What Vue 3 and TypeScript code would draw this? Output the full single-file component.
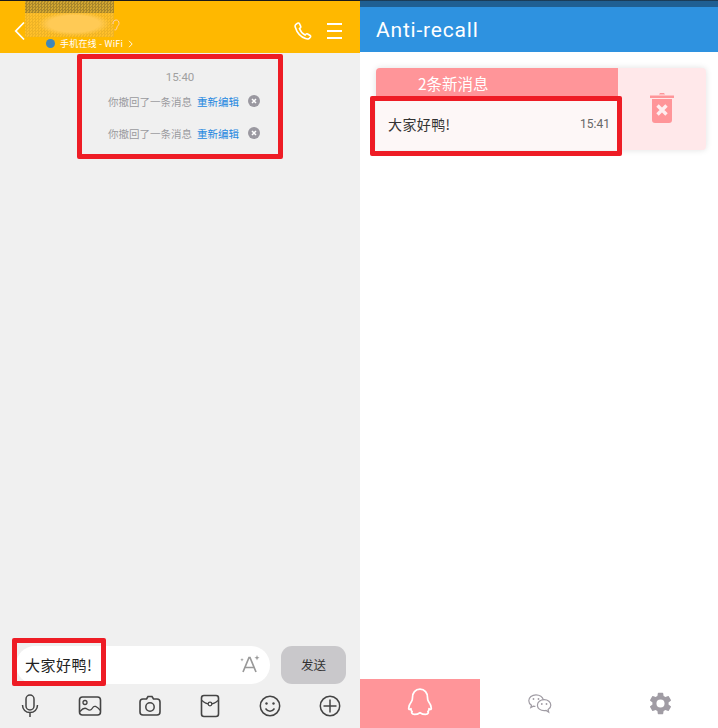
<script setup lang="ts">
const recalled: string[] = ['你撤回了一条消息', '你撤回了一条消息']
</script>

<template>
  <div class="page">
    <section class="chat">
      <header class="chat-head">
        <div class="mosaic">
          <div class="mosaic-dark"></div>
          <div class="mosaic-light"></div>
        </div>
        <svg class="ear" width="8" height="12" viewBox="0 0 8 12"><path d="M1 5c0-2.500 1.300-4 3.200-4S7 2.500 7 4.500 4.800 7 4.800 9 3.500 11 2.500 10.800" fill="none" stroke="#ffd0b0" stroke-width="1"/></svg>
        <svg class="back" width="12" height="20" viewBox="0 0 12 20"><path d="M10 1.500 1.800 10 10 18.500" fill="none" stroke="#fff" stroke-width="1.800"/></svg>
        <div class="status">
          <span class="dot"></span>
          <span>手机在线 - WiFi</span>
          <svg width="5" height="8" viewBox="0 0 5 8"><path d="M1 .8 4.200 4 1 7.200" fill="none" stroke="#fff" stroke-width=".9"/></svg>
        </div>
        <div class="head-actions">
          <svg width="18" height="18" viewBox="0 0 18 18"><path d="M3.600 1.200 1.700 2.600c-.7.600-.7 1.600-.4 2.600 1.600 5.300 5.400 9.600 10.300 11.400 1.300.5 2.700.5 3.700-.3l1-1.100c.5-.6.400-1.300-.2-1.700l-2.400-1.500c-.6-.4-1.300-.3-1.800.2l-.8.8c-2.600-1.200-4.600-3.600-5.600-6.400l.8-.7c.5-.5.600-1.100.3-1.700L5.300 1.500c-.4-.6-1.100-.7-1.700-.3Z" fill="none" stroke="#fff" stroke-width="1.600"/></svg>
          <div class="menu"><i></i><i></i><i></i></div>
        </div>
      </header>

      <div class="thread">
        <div class="time">15:40</div>
        <div v-for="(text, i) in recalled" :key="i" class="recall">
          <span class="recall-text">{{ text }}</span>
          <span class="recall-link">重新编辑</span>
          <svg width="12" height="12" viewBox="0 0 12 12"><circle cx="6" cy="6" r="6" fill="#9a98a0"/><path d="M4 4l4 4M8 4l-4 4" stroke="#fff" stroke-width="1.500"/></svg>
        </div>
        <div class="mark mark-top"></div>
      </div>

      <div class="composer">
        <div class="field">
          <span class="field-text">大家好鸭!</span>
          <svg class="font-icon" width="20" height="18" viewBox="0 0 20 18"><path d="M3 17 9 2.500h1L16 17M5 12.500h9" fill="none" stroke="#999" stroke-width="1.700"/><path d="M17 0l.7 2 1.900.7-1.900.7-.7 2-.7-2-1.900-.7 1.900-.7ZM2 3l.5 1.200 1.200.5-1.200.5L2 6.500l-.5-1.300-1.200-.5 1.200-.5Z" fill="#999"/></svg>
        </div>
        <div class="send">发送</div>
        <div class="mark mark-input"></div>
      </div>

      <div class="tools">
        <svg width="22" height="24" viewBox="0 0 22 24"><rect x="7" y="1" width="8" height="15" rx="4" fill="none" stroke="#444" stroke-width="1.500"/><path d="M3.500 11c0 4.500 3.200 7.500 7.500 7.500s7.500-3 7.500-7.500M11 18.500V23" fill="none" stroke="#444" stroke-width="1.500"/></svg>
        <svg width="24" height="22" viewBox="0 0 24 22"><rect x="1.500" y="2" width="21" height="18" rx="3" fill="none" stroke="#444" stroke-width="1.600"/><circle cx="7" cy="7.500" r="2" fill="none" stroke="#444" stroke-width="1.300"/><path d="M2 16.500c3-3.500 5-4 7-2.500s4 2 5.500-1 4-2 8 2.500" fill="none" stroke="#444" stroke-width="1.300"/></svg>
        <svg width="24" height="22" viewBox="0 0 24 22"><path d="M8.500 4 10 1.500h4L15.500 4H19a3 3 0 0 1 3 3v10a3 3 0 0 1-3 3H5a3 3 0 0 1-3-3V7a3 3 0 0 1 3-3Z" fill="none" stroke="#444" stroke-width="1.600"/><circle cx="12" cy="12" r="4.200" fill="none" stroke="#444" stroke-width="1.500"/></svg>
        <svg width="20" height="24" viewBox="0 0 20 24"><rect x="1.500" y="1.500" width="17" height="21" rx="2.500" fill="none" stroke="#444" stroke-width="1.600"/><path d="M2 6.500c2.500 2.500 5 3.500 8 3.500s5.500-1 8-3.500" fill="none" stroke="#444" stroke-width="1.300"/><circle cx="10" cy="10" r="1.800" fill="#f0f0f0" stroke="#444" stroke-width="1.200"/></svg>
        <svg width="22" height="22" viewBox="0 0 22 22"><circle cx="11" cy="11" r="9.700" fill="none" stroke="#444" stroke-width="1.500"/><circle cx="7.500" cy="8.500" r="1.200" fill="#444"/><circle cx="14.500" cy="8.500" r="1.200" fill="#444"/><path d="M6.500 13.500c1.200 1.800 2.700 2.700 4.500 2.700s3.300-.9 4.500-2.700" fill="none" stroke="#444" stroke-width="1.400"/></svg>
        <svg width="22" height="22" viewBox="0 0 22 22"><circle cx="11" cy="11" r="9.700" fill="none" stroke="#444" stroke-width="1.500"/><path d="M11 4.500v13M4.500 11h13" stroke="#444" stroke-width="1.500"/></svg>
      </div>
    </section>

    <section class="app">
      <div class="app-strip"></div>
      <header class="app-head">Anti-recall</header>
      <main class="app-body">
        <div class="card">
          <div class="card-main">
            <div class="card-title">2条新消息</div>
            <div class="card-row">
              <span class="card-msg">大家好鸭!</span>
              <span class="card-time">15:41</span>
            </div>
            <div class="mark mark-card"></div>
          </div>
          <div class="card-del">
            <svg width="24" height="31" viewBox="0 0 24 31"><path d="M0 3.500h24V6H0ZM9 2.500 10 1h4l1 1.500Z" fill="#ff9599"/><path d="M2 7h20v21a3 3 0 0 1-3 3H5a3 3 0 0 1-3-3Z" fill="#ff9599"/><path d="m7.500 13.500 9 9M16.500 13.500l-9 9" stroke="#ffeef0" stroke-width="3.400"/></svg>
          </div>
        </div>
      </main>
      <nav class="tabs">
        <div class="tab tab-on">
          <svg width="26" height="28" viewBox="0 0 26 28"><path d="M13 1.200C8.200 1.200 5.500 5 5.500 9.500c0 1.500-.2 2.800-1 3.900-1.500 2-2.800 4.500-2.800 6.800 0 1 .4 1.400 1 1.200l1.300-.8c-.2 1.400.3 2.400 1.200 3.100-1 .4-.8 2.700 2.300 2.700 2.300 0 4-.7 5.500-1.700 1.500 1 3.200 1.700 5.500 1.700 3.100 0 3.300-2.300 2.300-2.700.9-.7 1.400-1.700 1.200-3.100l1.300.8c.6.200 1-.2 1-1.200 0-2.300-1.300-4.800-2.800-6.800-.8-1.100-1-2.400-1-3.900C20.500 5 17.800 1.200 13 1.200Z" fill="none" stroke="#fff" stroke-width="1.700" stroke-linejoin="round"/></svg>
        </div>
        <div class="tab">
          <svg width="24" height="20" viewBox="0 0 24 20"><path d="M8 .8C4 .8.800 3.400.800 6.700c0 1.900 1 3.500 2.700 4.600l-.7 2.200 2.600-1.400c.6.200 1.300.3 2 .3M15.400 6C14.700 3 11.600.8 8 .8" fill="none" stroke="#a09ca4" stroke-width="1.200"/><path d="M16.200 5.700c-3.800 0-6.800 2.400-6.800 5.500s3 5.500 6.800 5.500c.7 0 1.300-.1 1.900-.3l2.600 1.700-.6-2.500c1.600-1 2.700-2.600 2.700-4.400 0-3.100-2.900-5.500-6.600-5.500Z" fill="none" stroke="#a09ca4" stroke-width="1.200"/><circle cx="5.500" cy="5" r=".9" fill="#a09ca4"/><circle cx="10.500" cy="5" r=".9" fill="#a09ca4"/><circle cx="13.800" cy="10" r=".9" fill="#a09ca4"/><circle cx="18.500" cy="10" r=".9" fill="#a09ca4"/></svg>
        </div>
        <div class="tab">
          <svg width="27" height="27" viewBox="0 0 24 24"><path fill="#a09ca4" d="M19.140 12.940c.04-.3.060-.61.060-.94s-.02-.64-.07-.94l2.030-1.580a.49.490 0 0 0 .12-.61l-1.920-3.320a.49.490 0 0 0-.59-.22l-2.390.96a7 7 0 0 0-1.620-.94l-.36-2.540a.48.480 0 0 0-.48-.41h-3.840a.48.480 0 0 0-.47.41l-.36 2.540c-.59.240-1.130.57-1.620.94l-2.390-.96a.48.480 0 0 0-.59.220L2.730 8.870a.48.480 0 0 0 .12.610l2.030 1.580c-.05.300-.08.630-.08.940s.02.640.07.940l-2.030 1.580a.49.490 0 0 0-.12.610l1.920 3.320c.12.220.37.290.59.220l2.390-.96c.5.380 1.030.7 1.620.94l.36 2.540c.05.240.24.410.48.410h3.840c.24 0 .44-.17.47-.41l.36-2.540c.59-.24 1.130-.56 1.620-.94l2.390.96c.22.080.47 0 .59-.22l1.920-3.320a.48.480 0 0 0-.12-.61ZM12 15.600a3.600 3.600 0 1 1 0-7.200 3.600 3.600 0 0 1 0 7.200Z"/></svg>
        </div>
      </nav>
    </section>
  </div>
</template>

<style>
html, body { margin: 0; background: #fff; }
</style>

<style scoped>
.page {
  width: 718px;
  height: 728px;
  display: flex;
  overflow: hidden;
  font-family: "Noto Sans CJK SC", "Noto Sans", sans-serif;
}
.chat {
  width: 360px;
  display: flex;
  flex-direction: column;
  background: #f0f0f0;
  border-top: 1px solid #1a1a1a;
  box-sizing: border-box;
}
.chat-head {
  position: relative;
  height: 52px;
  flex: none;
  display: flex;
  align-items: flex-start;
  background: #ffb800;
  padding: 0 18px 0 14px;
}
.mosaic {
  position: absolute;
  left: 25px;
  top: 0;
  width: 89px;
  height: 36px;
  display: flex;
  flex-direction: column;
  background: #ffc02a;
}
.mosaic-dark {
  height: 12px;
  background:
    repeating-conic-gradient(rgba(70, 60, 30, .3) 0 25%, transparent 0 50%) 0 0 / 3px 3px,
    #d2a630;
}
.mosaic-light {
  flex: 1;
  background:
    radial-gradient(ellipse 36px 12px at 55% 45%, #ffca55 0 70%, transparent 100%),
    repeating-conic-gradient(rgba(200, 150, 30, .3) 0 25%, transparent 0 50%) 0 0 / 3px 3px,
    #ffc02a;
}
.ear { position: absolute; left: 112px; top: 18px; }
.back { position: relative; margin-top: 20px; flex: none; }
.status {
  position: absolute;
  left: 46px;
  top: 36px;
  display: flex;
  align-items: center;
  gap: 5px;
  color: #fff;
  font-size: 9px;
  letter-spacing: .2px;
  line-height: 13px;
}
.dot { width: 9px; height: 9px; border-radius: 50%; background: #3f86b8; }
.head-actions {
  margin-left: auto;
  margin-top: 21px;
  display: flex;
  align-items: center;
  gap: 15px;
}
.menu { width: 15px; display: flex; flex-direction: column; gap: 5px; }
.menu i { display: block; height: 2px; background: #fff; }
.thread {
  position: relative;
  flex: 1;
  display: flex;
  flex-direction: column;
  align-items: center;
  padding-top: 16px;
}
.time { color: #a0a0a0; font-size: 11.500px; line-height: 16px; font-family: Roboto, sans-serif; margin-bottom: 8px; }
.recall {
  height: 32px;
  display: flex;
  align-items: center;
  font-size: 10.500px;
  margin-top: -8px;
  margin-bottom: 8px;
  padding-left: 36px;
  align-self: flex-start;
  margin-left: 72px;
}
.recall-text { color: #9a9a9e; }
.recall-link { color: #1e88e0; margin: 0 9px 0 5px; }
.composer {
  position: relative;
  flex: none;
  display: flex;
  gap: 11px;
  padding: 0 14px 0 16px;
}
.field {
  flex: 1;
  height: 38px;
  border-radius: 19px;
  background: #fff;
  display: flex;
  align-items: center;
  justify-content: space-between;
  padding: 0 10px 2px 9px;
  box-sizing: border-box;
}
.field-text { color: #222; font-size: 15px; letter-spacing: .5px; }
.send {
  width: 65px;
  height: 38px;
  border-radius: 11px;
  background: #c9c8cb;
  color: #333;
  font-size: 12.500px;
  display: flex;
  align-items: center;
  justify-content: center;
  padding-bottom: 2px;
  box-sizing: border-box;
}
.tools {
  flex: none;
  height: 44px;
  display: grid;
  grid-template-columns: repeat(6, 60px);
  place-items: center;
}
.mark {
  position: absolute;
  border: 5px solid #ee1c25;
  border-radius: 2px;
  box-sizing: border-box;
  pointer-events: none;
}
.mark-top { left: 77px; top: 1px; width: 206px; height: 105px; }
.mark-input { left: 12px; top: -8px; width: 94px; height: 48px; }
.mark-card { left: -6px; top: 28px; width: 252px; height: 60px; }
.app {
  width: 358px;
  display: flex;
  flex-direction: column;
  background: #fff;
}
.app-strip { height: 7px; flex: none; background: linear-gradient(180deg, #1a2a38 0, #1f5f93 20%); }
.app-head {
  height: 45px;
  flex: none;
  background: #2e92e0;
  color: #fff;
  font-family: Roboto, sans-serif;
  font-size: 21px;
  letter-spacing: .8px;
  line-height: 46px;
  padding-left: 16px;
}
.app-body { flex: 1; padding: 16px 12px 0 16px; }
.card {
  display: flex;
  height: 82px;
  border-radius: 4px;
  box-shadow: 0 0 6px rgba(0, 0, 0, .12);
  background: #ffe8ea;
}
.card-main { position: relative; width: 242px; display: flex; flex-direction: column; }
.card-title {
  height: 29px;
  flex: none;
  background: #ff9599;
  color: #fff;
  font-size: 15.500px;
  line-height: 30px;
  padding-left: 42px;
  border-radius: 4px 0 0 0;
}
.card-row {
  flex: 1;
  background: #fdf7f7;
  display: flex;
  align-items: center;
  justify-content: space-between;
  padding: 0 8px 0 12px;
}
.card-msg { color: #333; font-size: 14px; letter-spacing: .4px; }
.card-time { color: #666; font-size: 12px; font-family: Roboto, sans-serif; }
.card-del { flex: 1; display: flex; align-items: center; justify-content: center; padding-bottom: 4px; }
.tabs {
  flex: none;
  height: 49px;
  display: grid;
  grid-template-columns: repeat(3, 120px);
}
.tab { display: flex; align-items: center; justify-content: center; }
.tab-on { background: #ff9599; padding-bottom: 3px; box-sizing: border-box; }
</style>
